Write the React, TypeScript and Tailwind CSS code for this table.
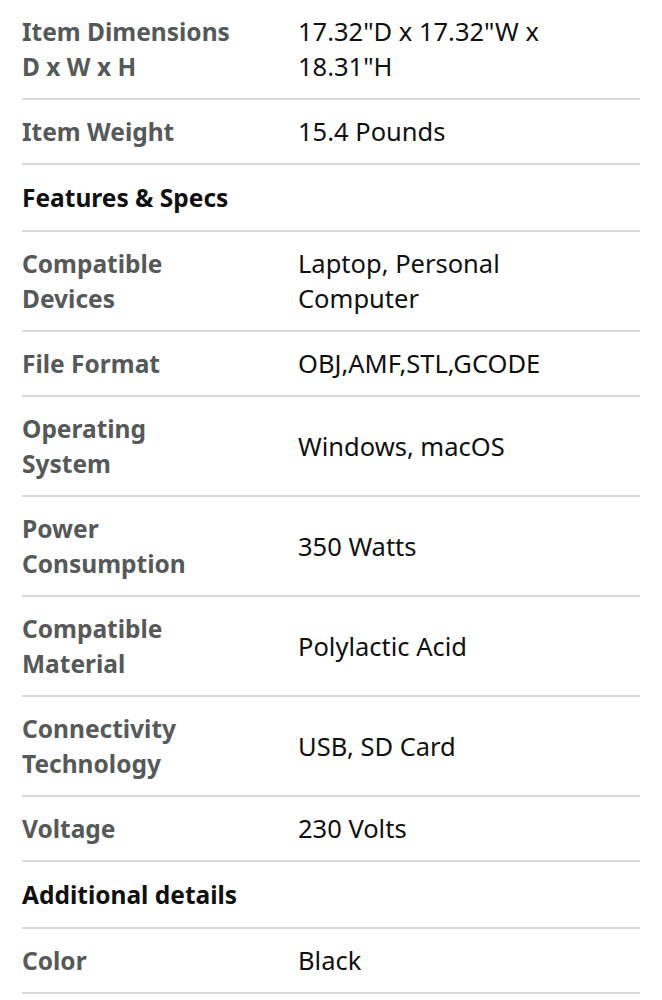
import React from "react";

type Row = { kind: "row"; label: string; value: string } | { kind: "head"; label: string };

const rows: Row[] = [
  { kind: "row", label: "Item Dimensions D x W x H", value: "17.32\"D x 17.32\"W x 18.31\"H" },
  { kind: "row", label: "Item Weight", value: "15.4 Pounds" },
  { kind: "head", label: "Features & Specs" },
  { kind: "row", label: "Compatible Devices", value: "Laptop, Personal Computer" },
  { kind: "row", label: "File Format", value: "OBJ,AMF,STL,GCODE" },
  { kind: "row", label: "Operating System", value: "Windows, macOS" },
  { kind: "row", label: "Power Consumption", value: "350 Watts" },
  { kind: "row", label: "Compatible Material", value: "Polylactic Acid" },
  { kind: "row", label: "Connectivity Technology", value: "USB, SD Card" },
  { kind: "row", label: "Voltage", value: "230 Volts" },
  { kind: "head", label: "Additional details" },
  { kind: "row", label: "Color", value: "Black" },
];

export default function App() {
  return (
    <div className="min-h-screen bg-white px-[22px] leading-[35px]" style={{ fontFamily: '"Noto Sans", "Open Sans", sans-serif' }}>
      <div className="border-t-2 border-[#d9d9d9] -mt-[2px]">
        {rows.map((r, i) =>
          r.kind === "head" ? (
            <div key={i} className="border-b-2 border-[#d9d9d9] py-[15px] text-[24.5px] font-bold text-[#0f1111]">
              {r.label}
            </div>
          ) : (
            <div key={i} className="grid grid-cols-[276px_1fr] items-center border-b-2 border-[#d9d9d9] py-[14px]">
              <div className="w-[213px] text-[24.5px] font-bold text-[#565959]">{r.label}</div>
              <div className="w-[305px] text-[25.5px] text-[#0f1111]">{r.value}</div>
            </div>
          )
        )}
      </div>
    </div>
  );
}
